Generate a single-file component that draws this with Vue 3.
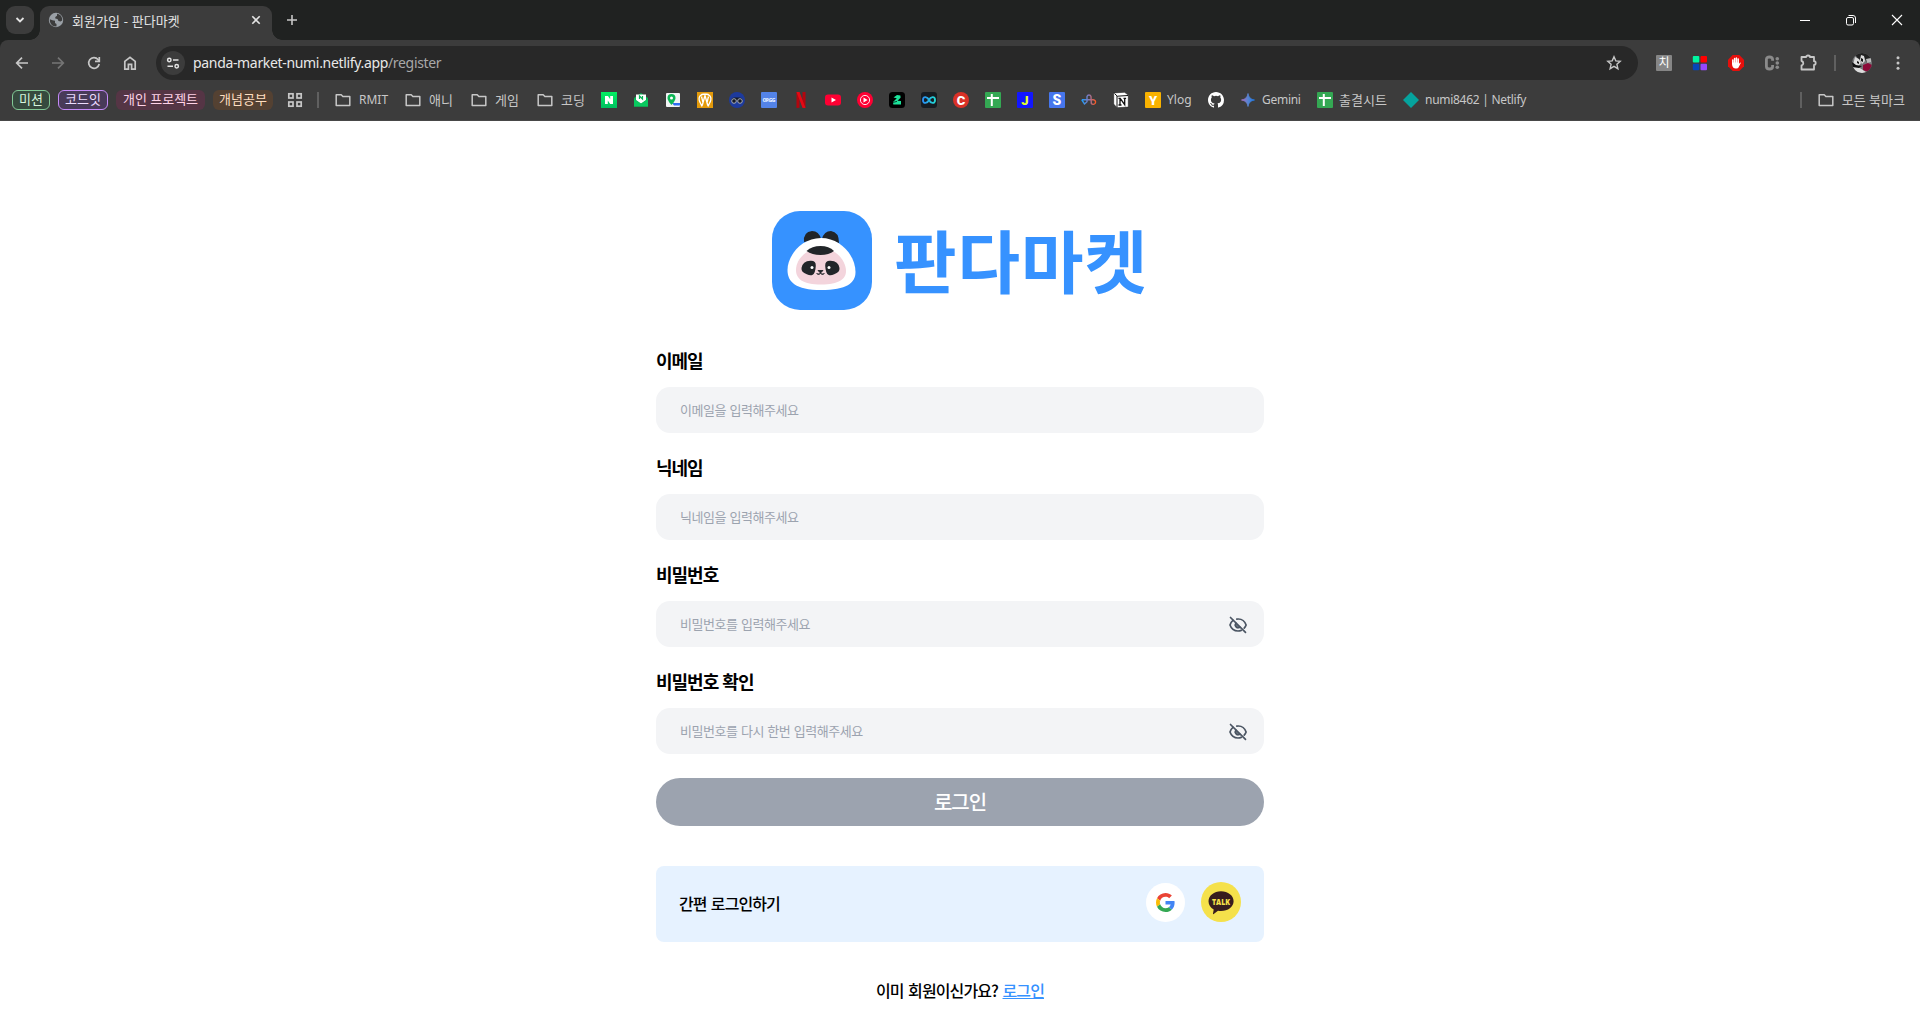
<script setup>
const folder = '<path d="M1.2 2.7h5l1.7 1.8h6.9v9H1.2z" fill="none" stroke="#c7c7c7" stroke-width="1.5" stroke-linejoin="round"/>'
const sheet = '<rect width="16" height="16" rx="1" fill="#34a853"/><path d="M2 6h12M6.8 2v12" stroke="#fff" stroke-width="2" fill="none"/>'
const letter = (bg, ch, fg = '#fff', r = 1, size = 13) =>
  `<rect width="16" height="16" rx="${r}" fill="${bg}"/><text x="8" y="12.6" text-anchor="middle" font-family="Roboto, sans-serif" font-weight="900" font-size="${size}" fill="${fg}">${ch}</text>`

const groups = [
  { text: '미션', w: 38, cls: 'green' },
  { text: '코드잇', w: 50, cls: 'purple' },
  { text: '개인 프로젝트', w: 89, cls: 'pink' },
  { text: '개념공부', w: 60, cls: 'orange' },
]

const bookmarks = [
  { icon: folder, text: 'RMIT', w: 70 },
  { icon: folder, text: '애니', w: 66, ko: true },
  { icon: folder, text: '게임', w: 66, ko: true },
  { icon: folder, text: '코딩', w: 64, ko: true },
  { icon: '<defs><linearGradient id="nv" x2="0" y2="1"><stop stop-color="#03ef62"/><stop offset="1" stop-color="#00bf60"/></linearGradient></defs><rect width="16" height="16" fill="url(#nv)"/><path d="M4 12V4h3l2.200 3.300V4H12v8H9.200L6.800 8.600V12z" fill="#fff"/>', w: 32 },
  { icon: '<path d="M1 6l7-5 7 5v8.500H1z" fill="#04b354"/><path d="M3 2.500h10V8l-5 3.500L3 8z" fill="#fff"/><path d="M6.500 7V4l3 3V4" stroke="#04b354" stroke-width="1.200" fill="none"/><path d="M1 7l7 5 7-5v7.500H1z" fill="#09c95f"/>', w: 32 },
  { icon: '<rect x="1" y="1" width="14" height="14" rx="1" fill="#f1f3f4"/><path d="M7 11h8v2.600H9z" fill="#2f6df0"/><path d="M6.500 2a4 4 0 0 1 4 4c0 3-4 7-4 7s-4-4-4-7a4 4 0 0 1 4-4z" fill="#0cb655"/><circle cx="6.500" cy="6" r="1.500" fill="#fff"/>', w: 32 },
  { icon: '<rect width="16" height="16" fill="#e39a0b"/><path d="M3 10.500C.5 5 3.500 2 8 2s7.500 3 5 8.500M5 14.500L2.700 9.500M11 14.500l2.300-5M5.200 13.500L8 3.500l2.800 10M4.500 4.500l1.500 6M11.500 4.500l-1.500 6" stroke="#fff" stroke-width="1.300" fill="none"/>', w: 32 },
  { icon: '<circle cx="8" cy="8" r="8" fill="#1d3a9c"/><path d="M2 8.500Q3 5.500 5.500 5.500h5Q13 5.500 14 8.500z" fill="#161b29"/><circle cx="5" cy="9" r="2.300" fill="#151924" stroke="#a9aeb8"/><circle cx="11" cy="9" r="2.300" fill="#151924" stroke="#a9aeb8"/>', w: 32 },
  { icon: '<rect width="16" height="16" rx="1" fill="#5383e8"/><text x="8" y="9.800" text-anchor="middle" font-family="Open Sans, sans-serif" font-weight="800" font-size="5" fill="#dbe6ff" textLength="13">OP.GG</text>', w: 32 },
  { icon: '<path d="M3.500 0h3v15.700l-3 .3zM9.500 0h3v16l-3-.3z" fill="#b1060f"/><path d="M3.500 0h3l6 16-3-.3z" fill="#e50914"/>', w: 32 },
  { icon: '<rect y="2.500" width="16" height="11" rx="3" fill="#ff0033"/><path d="M6.500 5.500L11 8l-4.500 2.500z" fill="#fff"/>', w: 32 },
  { icon: '<circle cx="8" cy="8" r="8" fill="#ff0033"/><circle cx="8" cy="8" r="4.600" fill="none" stroke="#fff" stroke-width=".9"/><path d="M6.500 5.600L10.600 8l-4.100 2.400z" fill="#fff"/>', w: 32 },
  { icon: '<rect width="16" height="16" rx="3.500" fill="#000"/><path d="M4.500 5.500L8 3l3.400.5.2 2.200L8.500 8.800 12 9v3.500H4.300L4 10l3.800-3.800z" fill="#1be39a"/><path d="M4 10.400l4-1" stroke="#000" stroke-width=".7"/>', w: 32 },
  { icon: '<defs><linearGradient id="inf"><stop stop-color="#298ff5"/><stop offset="1" stop-color="#22d8d2"/></linearGradient></defs><rect width="16" height="16" rx="3" fill="#171c22"/><path d="M8 8C6.500 4.800 2 3.600 2 8s4.500 3.200 6 0 6-4.400 6 0-4.500 3.200-6 0z" fill="none" stroke="url(#inf)" stroke-width="1.900"/>', w: 32 },
  { icon: letter('#d93127', 'C', '#fff', 8), w: 32 },
  { icon: sheet, w: 32 },
  { icon: letter('#1216ff', 'J', '#e2ff28'), w: 32 },
  { icon: letter('#4676ed', 'S', '#fff', 1, 14), w: 32 },
  { icon: '<defs><linearGradient id="kn"><stop stop-color="#19a0ff"/><stop offset=".5" stop-color="#8577b8"/><stop offset="1" stop-color="#ff5a20"/></linearGradient></defs><path d="M.8 7.800h11.500a2.300 2.300 0 1 1-2 3.500L10 4.500a2.100 2.100 0 0 0-4 0v5.300L3.500 12 .8 7.800" fill="none" stroke="url(#kn)" stroke-width="1.400"/>', w: 32 },
  { icon: '<path d="M.7.9L11.500.3l3.800 2.800v12L4 15.700.7 12z" fill="#fff" stroke="#111" stroke-width=".5"/><path d="M1.500 1.500l2.800 2.700L15 3.500M4 4v11.500" stroke="#111" stroke-width="1" fill="none"/><path d="M5.500 6.300h1.700l4.500 6.300V6.500M7 13V6.500M5.500 13h3M10.500 6.300h2.600" stroke="#111" stroke-width="1.300" fill="none"/>', w: 32 },
  { icon: letter('#f9b200', 'Y'), text: 'Ylog', w: 63 },
  { icon: '<path fill="#fff" d="M8 0C3.580 0 0 3.580 0 8c0 3.540 2.290 6.530 5.470 7.590.4.070.55-.17.55-.38 0-.19-.01-.82-.01-1.490-2.010.37-2.530-.49-2.690-.94-.09-.23-.48-.94-.82-1.130-.28-.15-.68-.52-.01-.53.63-.01 1.080.58 1.230.82.72 1.210 1.870.87 2.330.66.070-.52.28-.87.51-1.070-1.780-.2-3.640-.89-3.640-3.950 0-.87.31-1.590.82-2.150-.08-.2-.36-1.020.08-2.120 0 0 .67-.21 2.200.82a7.600 7.600 0 0 1 4 0c1.530-1.040 2.200-.82 2.200-.82.44 1.100.16 1.920.08 2.120.51.56.82 1.270.82 2.150 0 3.070-1.870 3.750-3.650 3.950.29.25.54.73.54 1.480 0 1.070-.01 1.930-.01 2.200 0 .21.15.46.55.38A8.010 8.010 0 0 0 16 8c0-4.420-3.580-8-8-8z"/>', w: 32 },
  { icon: '<defs><linearGradient id="gm"><stop stop-color="#a96ec2"/><stop offset=".5" stop-color="#5684d1"/><stop offset="1" stop-color="#1b78e8"/></linearGradient></defs><path d="M8 1.500Q8.800 7.200 14.500 8 8.800 8.800 8 14.500 7.200 8.800 1.500 8 7.200 7.200 8 1.500z" fill="url(#gm)" stroke="url(#gm)" stroke-width=".8"/>', text: 'Gemini', w: 77, tight: true },
  { icon: sheet, text: '출결시트', w: 86, ko: true },
  { icon: '<path d="M8 0l8 8-8 8-8-8z" fill="#05a39d"/>', text: 'numi8462 | Netlify', w: 130, tight: true },
]

const fields = [
  { label: '이메일', hint: '이메일을 입력해주세요', type: 'email' },
  { label: '닉네임', hint: '닉네임을 입력해주세요', type: 'text' },
  { label: '비밀번호', hint: '비밀번호를 입력해주세요', type: 'password' },
  { label: '비밀번호 확인', hint: '비밀번호를 다시 한번 입력해주세요', type: 'password' },
]
</script>

<template>
  <div class="window">
    <header class="browser">
      <div class="tabs">
        <button class="tab-search"><svg width="10" height="10" viewBox="0 0 10 10"><path d="M1.500 3L5 6.500 8.500 3" fill="none" stroke="#e3e3e3" stroke-width="1.800" /></svg></button>
        <div class="tab">
          <svg class="globe" width="16" height="16" viewBox="0 0 16 16"><circle cx="8" cy="8" r="7.200" fill="#9aa0a6" /><path d="M1.800 7.300L4.500 8.300l2.500.4v2.300l1.500 1v2.500C4.500 14.700 1.600 12 1.800 7.300zM9 1.800v2L7.300 5v1.500l2.200.5 1 2 2 .5 1.700-1C14.600 5 12 2 9 1.800z" fill="#3c3c3c" /></svg>
          <span class="tab-title">회원가입 - 판다마켓</span>
          <svg class="tab-close" width="10" height="10" viewBox="0 0 10 10"><path d="M1.300 1.300l7.400 7.400M8.700 1.300L1.300 8.700" stroke="#e3e3e3" stroke-width="1.600" /></svg>
        </div>
        <svg class="new-tab" width="12" height="12" viewBox="0 0 12 12"><path d="M6 1v10M1 6h10" stroke="#c7c7c7" stroke-width="1.600" /></svg>
        <div class="controls">
          <span><svg width="12" height="12" viewBox="0 0 12 12"><path d="M1 6.500h10" stroke="#fff" /></svg></span>
          <span><svg width="12" height="12" viewBox="0 0 12 12"><rect x="1.500" y="3.500" width="7" height="7.500" rx="1.500" fill="none" stroke="#fff" /><path d="M3.500 1.500H8a2.500 2.500 0 0 1 2.500 2.500v5" fill="none" stroke="#fff" /></svg></span>
          <span><svg width="12" height="12" viewBox="0 0 12 12"><path d="M1 1l10 10M11 1L1 11" stroke="#fff" stroke-width="1.100" /></svg></span>
        </div>
      </div>

      <div class="toolbar">
        <span class="tool"><svg width="16" height="16" viewBox="0 0 16 16"><path d="M14 8H3M8 2.700L2.700 8 8 13.300" fill="none" stroke="#c7c7c7" stroke-width="1.700" /></svg></span>
        <span class="tool"><svg width="16" height="16" viewBox="0 0 16 16"><path d="M2 8h11M8 2.700L13.300 8 8 13.300" fill="none" stroke="#757575" stroke-width="1.700" /></svg></span>
        <span class="tool"><svg width="16" height="16" viewBox="0 0 16 16"><path d="M13.200 9A5.300 5.300 0 1 1 12 4.500l1.200 1.400" fill="none" stroke="#c7c7c7" stroke-width="1.700" /><path d="M13.300 2v4.300H9" fill="none" stroke="#c7c7c7" stroke-width="1.700" /></svg></span>
        <span class="tool"><svg width="16" height="16" viewBox="0 0 16 16"><path d="M2.800 14.200V6.400L8 2.300l5.200 4.100v7.800H9.600V9.400H6.400v4.800z" fill="none" stroke="#c7c7c7" stroke-width="1.700" /></svg></span>
        <div class="omnibox">
          <span class="site"><svg width="14" height="14" viewBox="0 0 14 14"><g fill="none" stroke="#e3e3e3" stroke-width="1.500"><circle cx="3.300" cy="4" r="1.700" /><path d="M7 4h5.500M1.500 10.200H7" /><circle cx="10.700" cy="10.200" r="1.700" /></g></svg></span>
          <span class="url">panda-market-numi.netlify.app<i>/register</i></span>
          <svg class="star" width="16" height="16" viewBox="0 0 16 16"><path d="M8 1.800l1.800 4.100 4.400.4-3.300 3 1 4.400L8 11.400l-3.900 2.300 1-4.400-3.300-3 4.400-.4z" fill="none" stroke="#c7c7c7" stroke-width="1.400" /></svg>
        </div>
        <span class="tool"><span class="ext-ji">치</span></span>
        <span class="tool"><svg width="16" height="16" viewBox="0 0 16 16"><rect x=".8" y="1" width="6.500" height="6.500" rx="1" fill="#00f5a0" /><rect x="8.500" y="1" width="6.500" height="6.500" rx="1" fill="#f00" /><rect x=".8" y="8.800" width="6.500" height="6.500" rx="1" fill="#0546b8" /><rect x="8.500" y="8.800" width="6.500" height="6.500" rx="1" fill="#9747ff" /></svg></span>
        <span class="tool"><svg width="16" height="16" viewBox="0 0 16 16"><path d="M4.700 0h6.600L16 4.700v6.600L11.300 16H4.700L0 11.300V4.700z" fill="#e60f0c" /><path d="M4.800 5v4M6.600 3.500V8M8.400 3v5M10.200 4v5" stroke="#fff" stroke-width="1.500" stroke-linecap="round" /><path d="M4.100 7.500h6.800V9l1-1.200q1-.5.8.4l-2.200 4.300q-.5 1-2 1h-1q-2.500 0-3.300-3z" fill="#fff" /></svg></span>
        <span class="tool"><svg width="16" height="16" viewBox="0 0 16 16"><path d="M8.600 5.800V4.500Q8.600 2 5.500 2T2.400 4.500v7Q2.400 14 5.500 14t3.100-2.500V10" fill="none" stroke="#8a8a8a" stroke-width="2.800" /><g fill="#8a8a8a"><circle cx="13.300" cy="3.800" r="1.800" /><circle cx="13.300" cy="8" r="1.800" /><circle cx="13.300" cy="12.200" r="1.800" /></g></svg></span>
        <span class="tool"><svg width="18" height="18" viewBox="0 0 18 18"><path d="M2.500 3h4.600a1.900 1.500 0 0 1 3.800 0H15v4.200a1.700 1.900 0 0 1 0 3.800v4.500H2.500v-4a2.300 2.300 0 0 0 0-4.500z" fill="none" stroke="#c7c7c7" stroke-width="1.800" stroke-linejoin="round" /></svg></span>
        <span class="rule tall"></span>
        <span class="tool"><svg width="20" height="20" viewBox="0 0 20 20"><defs><clipPath id="av"><circle cx="10" cy="10" r="10" /></clipPath></defs><g clip-path="url(#av)"><rect width="20" height="20" fill="#77787a" /><path d="M0 0h20v6l-5 4-3-6-5 3-3-4z" fill="#222" /><path d="M3 4l4 2 2 4-4 5-4-3zM9 2l3 1 1 5-3 3-2-4zM1 14h5l5 3 4 3H5z" fill="#dcdcdc" /><path d="M5 8l2 1v2l-2-1zM9 5l2 1v3l-2-1zM0 9l4 3 6 1-3 2-7-1z" fill="#111" /><path d="M11 12l5-2 4 2v4l-4 3-5-2z" fill="#8c0b38" /><path d="M14 6l5-1v4l-4 1z" fill="#bbb" /></g></svg></span>
        <span class="tool"><svg width="16" height="16" viewBox="0 0 16 16" fill="#c7c7c7"><circle cx="8" cy="2.700" r="1.500" /><circle cx="8" cy="8" r="1.500" /><circle cx="8" cy="13.300" r="1.500" /></svg></span>
      </div>

      <div class="bookbar">
        <div class="groups">
          <span v-for="g in groups" :key="g.text" class="chip" :class="g.cls" :style="{ width: g.w + 'px' }">{{ g.text }}</span>
        </div>
        <svg class="apps" width="16" height="16" viewBox="0 0 16 16"><g fill="none" stroke="#c7c7c7" stroke-width="1.700"><rect x="1.800" y="1.800" width="4.200" height="4.200" /><rect x="10" y="1.800" width="4.200" height="4.200" /><rect x="1.800" y="10" width="4.200" height="4.200" /><rect x="10" y="10" width="4.200" height="4.200" /></g></svg>
        <span class="rule"></span>
        <div class="links">
          <span v-for="(b, i) in bookmarks" :key="i" class="bookmark" :class="{ wide: i < 4, ko: b.ko, tight: b.tight }" :style="{ width: b.w + 'px' }">
            <svg width="16" height="16" viewBox="0 0 16 16" v-html="b.icon"></svg>
            <span v-if="b.text">{{ b.text }}</span>
          </span>
        </div>
        <span class="rule"></span>
        <span class="bookmark wide ko all"><svg width="16" height="16" viewBox="0 0 16 16" v-html="folder"></svg><span>모든 북마크</span></span>
      </div>
    </header>

    <main class="page">
      <h1 class="brand">
        <svg width="100" height="100" viewBox="0 0 100 100">
          <rect width="100" height="99" rx="28" fill="#3692ff" />
          <path d="M32 31q-1-10 8-11 7 0 9 8zM50 28q2-8 9-8 8 1 8 12z" fill="#212529" />
          <path d="M49 27c20 0 34.500 18 34.500 34 0 11-9 18-34.500 18S15.500 71 15.500 59C15.500 45 29 27 49 27z" fill="#fff" />
          <path d="M49 37c14 0 25 12 25 23 0 8-7 13.500-25 13.500S24 68 24 59c0-11 11-22 25-22z" fill="#f3d4dc" />
          <path d="M34.500 40Q40 35 48.500 35T62 40q-5 4-13.500 4t-14-4z" fill="#212529" />
          <path d="M29.500 57q1-7 9-7.300 5.500-.3 5.300 5-.4 8-3.500 9.300-2.300.8-5.500-.8-5.800-2-5.300-6.200zM67.500 57q-1-7-9-7.300-5.500-.3-5.300 5 .4 8 3.500 9.300 2.300.8 5.500-.8 5.800-2 5.300-6.200z" fill="#212529" />
          <circle cx="40" cy="56.500" r="1.500" fill="#fff" /><circle cx="57" cy="56.500" r="1.500" fill="#fff" />
          <path d="M46 59.500h5l-2.500 2.500zM48.500 61v1.500M44.500 62.500q2 2 4 0 2 2 4 0" fill="#212529" stroke="#212529" stroke-width=".9" />
        </svg>
        <span>판다마켓</span>
      </h1>

      <form class="form" @submit.prevent>
        <label v-for="f in fields" :key="f.label" class="field">
          <span class="label">{{ f.label }}</span>
          <span class="control">
            <input :type="f.type" :placeholder="f.hint" />
            <svg v-if="f.type === 'password'" width="24" height="24" viewBox="0 0 24 24"><g fill="none" stroke="#4b5563" stroke-width="1.700" stroke-linecap="round"><path d="M4.500 4.500l15 14.800" /><path d="M10.800 6.100c5-.7 8 2.300 9.300 5.900q-.7 1.900-1.900 3.200M7 7.300Q4.900 9 4 12c1.300 3.700 4.300 6 8 6q1.800 0 3.200-.6" /><path d="M10 10.200a2.700 2.700 0 0 0 3.800 3.800" /></g><path d="M10 10.200a2.700 2.700 0 1 0 3.800 3.800z" fill="#4b5563" opacity=".75" /></svg>
          </span>
        </label>
        <button class="submit">로그인</button>
      </form>

      <section class="easy">
        <span class="easy-text">간편 로그인하기</span>
        <div class="providers">
          <span class="google"><svg width="19" height="19" viewBox="0 0 48 48"><path fill="#EA4335" d="M24 9.500c3.540 0 6.710 1.220 9.210 3.600l6.850-6.850C35.900 2.380 30.470 0 24 0 14.620 0 6.510 5.380 2.560 13.220l7.980 6.190C12.430 13.720 17.740 9.500 24 9.500z" /><path fill="#4285F4" d="M46.980 24.550c0-1.570-.15-3.090-.38-4.550H24v9.020h12.940c-.58 2.960-2.260 5.480-4.780 7.180l7.730 6c4.510-4.180 7.090-10.360 7.090-17.650z" /><path fill="#FBBC05" d="M10.530 28.590c-.48-1.450-.76-2.990-.76-4.590s.27-3.140.76-4.590l-7.980-6.190C.92 16.460 0 20.120 0 24c0 3.880.92 7.540 2.560 10.780l7.970-6.190z" /><path fill="#34A853" d="M24 48c6.480 0 11.930-2.130 15.890-5.810l-7.730-6c-2.150 1.450-4.920 2.300-8.160 2.300-6.260 0-11.570-4.220-13.470-9.910l-7.980 6.190C6.510 42.620 14.620 48 24 48z" /></svg></span>
          <svg width="40" height="40" viewBox="0 0 40 40"><circle cx="20" cy="20" r="20" fill="#f5e14b" /><path d="M20 9.300c7 0 12.600 4.400 12.600 9.900S27 29 20 29q-1.500 0-3-.2l-4.300 3.300q-.9.400-.7-.6l.7-4.100C9.500 25.700 7.500 22.700 7.500 19.200c0-5.500 5.500-9.900 12.500-9.900z" fill="#371d1e" /><text x="20" y="22.700" text-anchor="middle" textLength="18" lengthAdjust="spacingAndGlyphs" font-family="Open Sans, sans-serif" font-weight="800" font-size="9.500" letter-spacing="0" fill="#f5e14b">TALK</text></svg>
        </div>
      </section>

      <p class="switch">이미 회원이신가요? <a>로그인</a></p>
    </main>
  </div>
</template>

<style>
body { margin: 0; background: #fff; overflow: hidden; }
</style>

<style scoped>
* { box-sizing: border-box; }
.window { height: 1032px; overflow: hidden; background: #fff; font-family: "Noto Sans CJK KR", sans-serif; }
svg { display: block; flex: none; }
.browser { height: 121px; background: #202221; font-family: "Noto Sans", "Noto Sans CJK KR", sans-serif; color: #c7c7c7; }

.tabs { height: 40px; display: flex; align-items: flex-end; padding-left: 6px; }
.tab-search { width: 28px; height: 28px; margin: 0 6px 6px 0; padding: 0; border: 0; border-radius: 9px; background: #3c3c3c; display: grid; place-items: center; }
.tab { position: relative; width: 232px; height: 34px; display: flex; align-items: center; padding: 0 10px 6px 8px; border-radius: 9px 9px 0 0; background: #3c3c3c; color: #e3e3e3; }
.tab::before, .tab::after { content: ""; position: absolute; bottom: 0; width: 10px; height: 10px; }
.tab::before { left: -10px; background: radial-gradient(circle at 0 0, transparent 9.5px, #3c3c3c 10px); }
.tab::after { right: -10px; background: radial-gradient(circle at 100% 0, transparent 9.5px, #3c3c3c 10px); }
.tab-title { flex: 1; margin-left: 8px; padding-top: 1px; font-size: 13px; line-height: 28px; word-spacing: 0.5px; white-space: nowrap; }
.tab-close { margin-right: 1px; }
.new-tab { margin: 0 0 14px 14px; }
.controls { display: flex; align-self: stretch; margin-left: auto; }
.controls span { width: 46px; display: grid; place-items: center; }

.toolbar { height: 46px; display: flex; align-items: center; padding: 0 4px; background: #3c3c3c; border-radius: 8px 8px 0 0; }
.tool { width: 36px; display: flex; justify-content: center; flex: none; }
.omnibox { flex: 1; height: 34px; margin: 0 8px; display: flex; align-items: center; padding: 0 16px 0 5px; border-radius: 17px; background: #282828; }
.site { width: 24px; height: 24px; border-radius: 50%; background: #3c3c3c; display: grid; place-items: center; }
.url { flex: 1; margin-left: 8px; padding-bottom: 1px; font-size: 14px; letter-spacing: -0.33px; color: #e8e8e8; white-space: nowrap; }
.url i { font-style: normal; color: #a8a8a8; }
.ext-ji { width: 16px; height: 16px; border-radius: 1px; background: #868686; color: #fff; font-size: 12px; line-height: 15px; text-align: center; }
.rule { width: 2px; height: 16px; background: #606060; flex: none; }
.rule.tall { margin: 0 8px; }

.bookbar { height: 35px; display: flex; align-items: center; padding: 0 15px 6px 12px; background: #3c3c3c; border-bottom: 1px solid #484848; font-size: 12px; }
.groups { display: flex; gap: 8px; }
.chip { height: 20px; border-radius: 6px; font-size: 13px; line-height: 17px; text-align: center; white-space: nowrap; border: 1px solid transparent; }
.green { background: #364a3e; border-color: #81c995; color: #d5f5dd; }
.purple { background: #483a59; border-color: #c58af9; color: #ecdcff; }
.pink { background: #553545; color: #ffd3e8; }
.orange { background: #544132; color: #ffdec0; }
.apps { margin: 0 14px; }
.links { display: flex; flex: 1; margin-left: 16px; }
.bookmark { display: flex; align-items: center; gap: 6px; line-height: 16px; white-space: nowrap; flex: none; }
.ko { font-size: 13px; }
.ko span { padding-bottom: 1px; }
.tight { letter-spacing: -0.28px; }
.wide { gap: 8px; }
.all { margin-left: 16px; }

.page { width: 608px; margin: 0 auto; padding-top: 90px; }
.brand { height: 100px; margin: 0; display: flex; justify-content: center; align-items: center; gap: 22px; color: #3692ff; font-size: 68px; line-height: 95px; font-weight: 700; letter-spacing: 1px; }
.brand span { padding-bottom: 5px; }
.form { margin-top: 35px; }
.field { display: block; height: 107px; }
.label { display: block; height: 41px; font-size: 18px; line-height: 28px; font-weight: 700; letter-spacing: -1px; word-spacing: 1px; color: #000; }
.control { height: 46px; display: flex; align-items: center; border-radius: 14px; background: #f3f4f6; padding: 0 14px 0 24px; }
.control input { flex: 1; min-width: 0; padding: 0 0 2px; border: 0; outline: 0; background: none; font-family: inherit; font-size: 13px; letter-spacing: -0.45px; word-spacing: 0.9px; }
.control input::placeholder { color: #9ca3af; opacity: 1; }
.control svg { margin-top: 1px; }
.submit { display: block; width: 100%; height: 48px; margin-top: 4px; padding: 0 0 2px; border: 0; border-radius: 24px; background: #9ca3af; color: #fff; font-family: inherit; font-size: 20px; font-weight: 500; letter-spacing: -1px; }
.easy { height: 76px; margin-top: 40px; padding: 0 23px; border-radius: 8px; background: #e6f2ff; display: flex; align-items: center; justify-content: space-between; font-size: 16px; font-weight: 500; letter-spacing: -0.9px; word-spacing: 1.5px; color: #000; }
.easy-text { padding-bottom: 3px; }
.providers { display: flex; align-items: center; gap: 16px; padding-bottom: 4px; }
.google { width: 39px; height: 39px; border-radius: 50%; background: #fff; display: grid; place-items: center; }
.switch { margin: 37px 0 0; text-align: center; font-size: 16px; line-height: 22px; font-weight: 500; letter-spacing: -0.9px; word-spacing: 1.8px; color: #000; }
.switch a { color: #3692ff; text-decoration: underline; }
</style>
